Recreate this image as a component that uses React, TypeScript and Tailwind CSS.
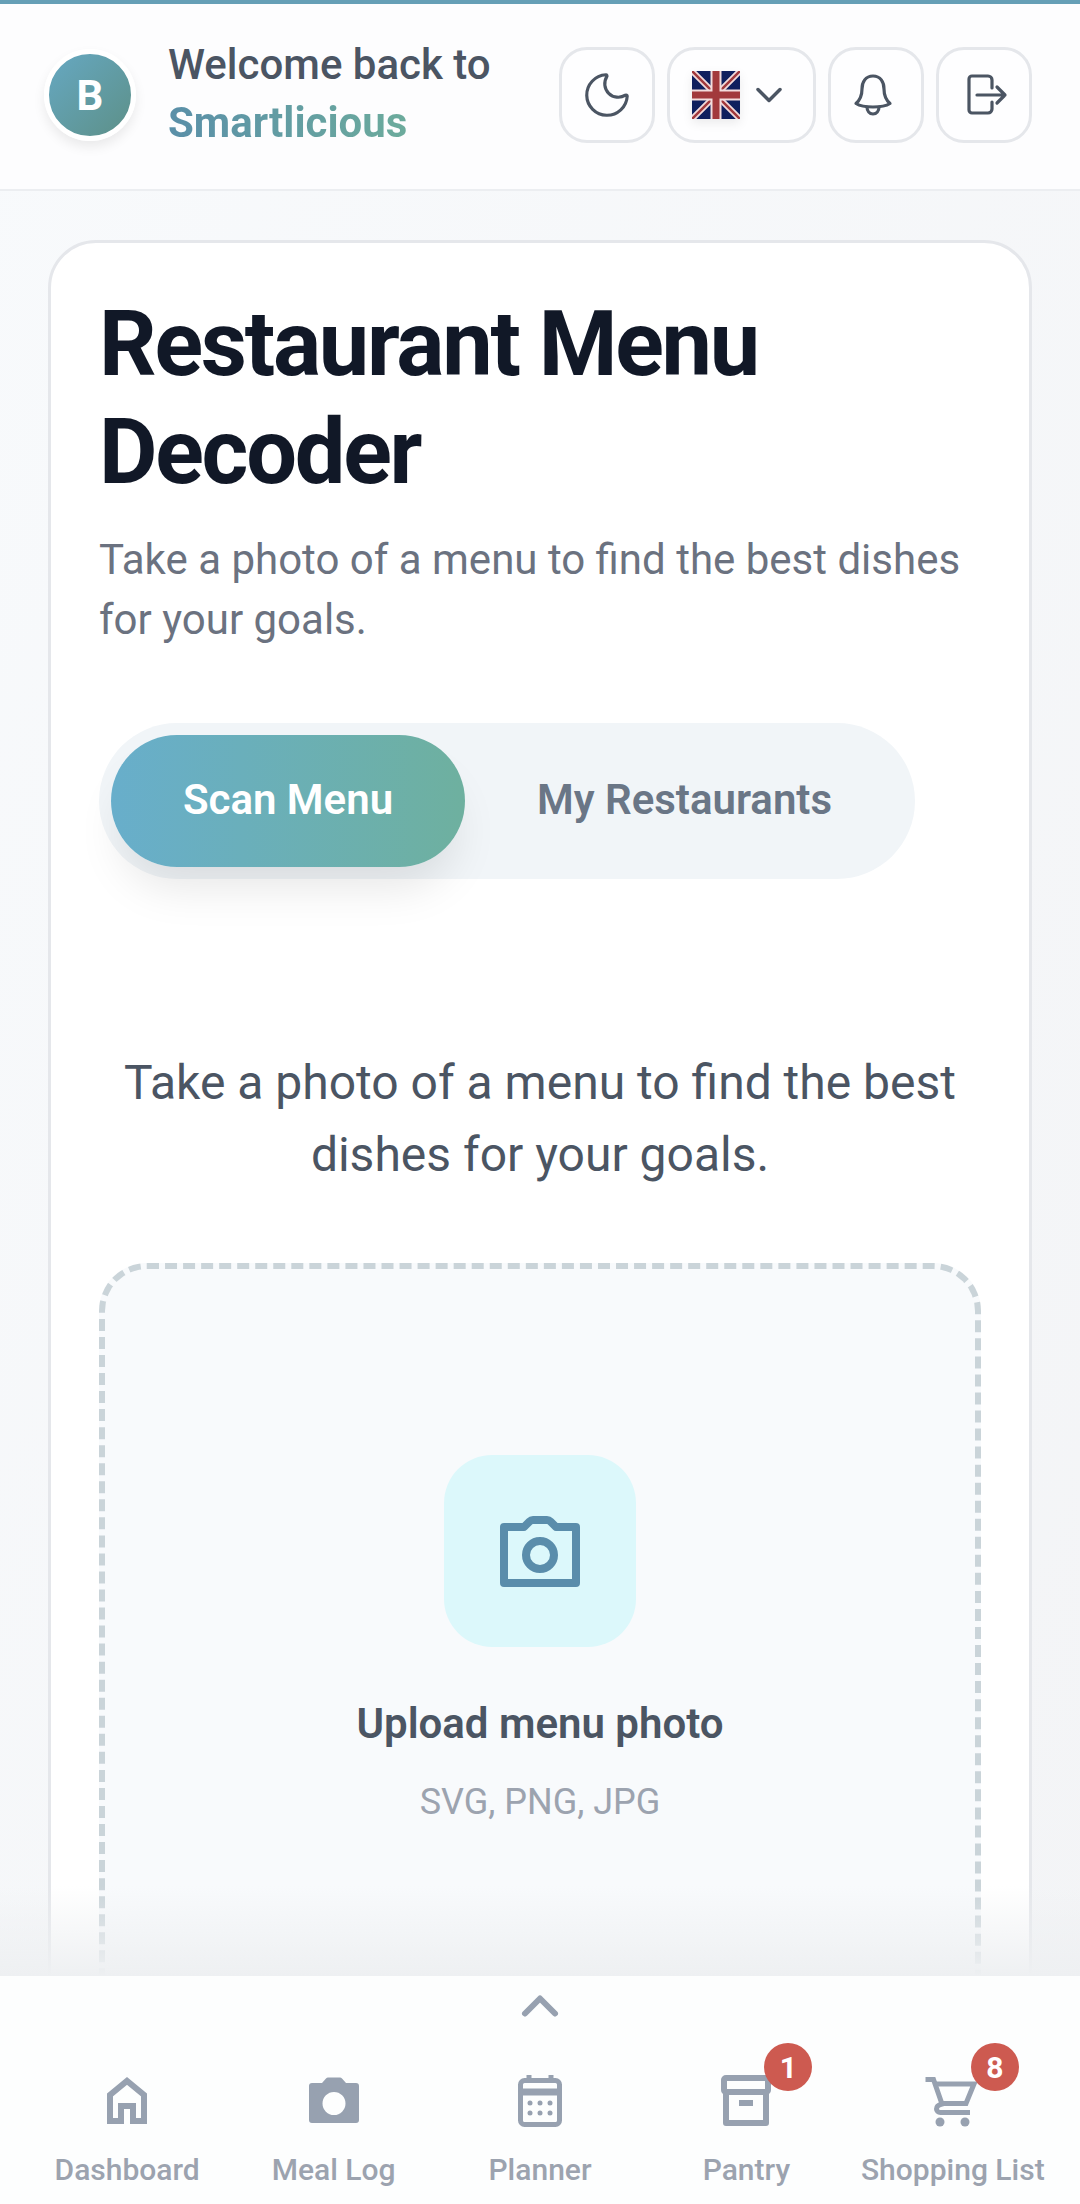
import { ChevronDown, ChevronUp, Moon } from "lucide-react";

function UkFlag() {
  return (
    <svg width="48" height="48" viewBox="0 0 48 48" className="block">
      <rect width="48" height="48" fill="#0f1f5e" />
      <path d="M0 0L48 48M48 0L0 48" stroke="#f3dcdc" strokeWidth="6" />
      <path d="M0 0L48 48M48 0L0 48" stroke="#a2393c" strokeWidth="2.500" />
      <path d="M24 0V48M0 24H48" stroke="#f3dcdc" strokeWidth="11" />
      <path d="M24 0V48M0 24H48" stroke="#a2393c" strokeWidth="7" />
    </svg>
  );
}

function BellIcon() {
  return (
    <svg width="48" height="48" viewBox="0 0 48 48" fill="none" stroke="#4b5563" strokeWidth="3.200" strokeLinecap="round" strokeLinejoin="round">
      <path d="M21 5c-7.500 0-11 6-11 13 0 7-2 11-6 14.500 4 2.500 10 3.500 17 3.500s13-1 17-3.500c-4-3.500-6-7.500-6-14.500 0-7-3.500-13-11-13Z" />
      <path d="M15 36c0 4 2.500 7 6 7s6-3 6-7" />
    </svg>
  );
}

function LogoutIcon() {
  return (
    <svg width="48" height="48" viewBox="0 0 48 48" fill="none" stroke="#4b5563" strokeWidth="3.200" strokeLinecap="round" strokeLinejoin="round">
      <path d="M32 17V9a4 4 0 0 0-4-4H12a3 3 0 0 0-3 3v31a3 3 0 0 0 3 3h16a4 4 0 0 0 4-4v-7" />
      <path d="M17 24H45M37 16l8 8-8 8" />
    </svg>
  );
}

function HomeIcon() {
  return (
    <svg width="60" height="60" viewBox="0 0 60 60" fill="none" stroke="#97a1b0" strokeWidth="6">
      <path d="M13 51V25L30 11l17 14v26H36V36H24v15Z" />
    </svg>
  );
}

function CameraSolid() {
  return (
    <svg width="60" height="60" viewBox="0 0 60 60">
      <path
        fill="#97a1b0"
        fillRule="evenodd"
        d="M8 13h10l4-4.500c.6-.6 1.300-.9 2-.9h12c.7 0 1.400.3 2 .9l4 4.500h10a3 3 0 0 1 3 3v34a3 3 0 0 1-3 3H8a3 3 0 0 1-3-3V16a3 3 0 0 1 3-3Zm22 9a11.500 11.500 0 1 0 0 23 11.500 11.500 0 0 0 0-23Z"
      />
    </svg>
  );
}

function CalendarIcon() {
  return (
    <svg width="60" height="60" viewBox="0 0 60 60" fill="none">
      <rect x="10.500" y="10.500" width="39" height="44" rx="4" stroke="#97a1b0" strokeWidth="5" />
      <path d="M10 22h40" stroke="#97a1b0" strokeWidth="7" />
      <path d="M19 5v7M41 5v7" stroke="#97a1b0" strokeWidth="5" />
      <g fill="#97a1b0">
        <circle cx="20" cy="33" r="2.500" />
        <circle cx="30" cy="33" r="2.500" />
        <circle cx="40" cy="33" r="2.500" />
        <circle cx="20" cy="43" r="2.500" />
        <circle cx="30" cy="43" r="2.500" />
        <circle cx="40" cy="43" r="2.500" />
      </g>
    </svg>
  );
}

function CartIcon() {
  return (
    <svg width="60" height="60" viewBox="0 0 60 60" fill="none" stroke="#97a1b0" strokeWidth="5">
      <path d="M2.500 9.500h8l8.500 24.500c-4 1-5.500 3-5.500 5s1.500 3.500 4 3.500H47" />
      <path d="M12 14h39l-8 19.500H19" />
      <circle cx="17" cy="52" r="4.500" fill="#97a1b0" stroke="none" />
      <circle cx="42" cy="52" r="4.500" fill="#97a1b0" stroke="none" />
    </svg>
  );
}

function BoxIcon() {
  return (
    <svg width="60" height="60" viewBox="0 0 60 60" fill="none" stroke="#97a1b0" strokeWidth="6" strokeLinejoin="round">
      <rect x="8" y="8" width="44" height="14" rx="2" />
      <path d="M10 22v31h40V22" />
      <path d="M23 33h14" />
    </svg>
  );
}

function CameraOutline() {
  return (
    <svg width="96" height="96" viewBox="0 0 96 96" fill="none" stroke="#5a8dab" strokeWidth="8" strokeLinejoin="round">
      <path d="M12 24h20l5.500-5.500c1-1 2-1.500 3.500-1.500h14c1.500 0 2.500.5 3.500 1.500L64 24h20v56H12Z" />
      <circle cx="48" cy="52" r="14" />
    </svg>
  );
}

function NavItem({ label, icon, badge }: { label: string; icon: React.ReactNode; badge?: string }) {
  return (
    <div className="flex flex-col items-center">
      <div className="relative flex h-[60px] w-[60px] items-center justify-center">
        {icon}
        {badge && (
          <span className="absolute left-[48px] top-[-27px] flex h-[48px] w-[48px] items-center justify-center rounded-full bg-[#cd5a50] text-[30px] font-bold text-white">
            {badge}
          </span>
        )}
      </div>
      <span className="mt-[17px] whitespace-nowrap text-[30px] font-medium leading-[45px] text-[#9ca3af]">{label}</span>
    </div>
  );
}

const headerBtn =
  "flex h-[96px] items-center justify-center rounded-[28px] border-[3px] border-[#e5e7eb] bg-white/60";

export default function App() {
  return (
    <div className="flex h-[2204px] flex-col overflow-hidden bg-linear-to-br from-[#f8fafc] to-[#f3f4f6] font-['Roboto',sans-serif]">
      <div className="h-[4px] shrink-0 bg-[#669fb6]" />
      <header className="flex h-[187px] shrink-0 items-center justify-between border-b-[2px] border-[#eceef1] bg-[#fdfdfe] pb-[3px] pl-[44px] pr-[48px]">
        <div className="flex items-center gap-[32px]">
          <div className="flex h-[92px] w-[92px] items-center justify-center rounded-full border-[5px] border-white bg-linear-to-br from-[#66a8c2] to-[#5d9088] text-[42px] font-bold text-white shadow-[0_6px_12px_rgba(0,0,0,0.08)]">
            B
          </div>
          <div className="mb-[2px] text-[42px] leading-[58px]">
            <div className="font-medium text-[#4b5563]">Welcome back to</div>
            <div className="w-fit bg-linear-to-r from-[#5a8fa8] to-[#6cab9c] bg-clip-text font-bold text-transparent">
              Smartlicious
            </div>
          </div>
        </div>
        <div className="flex items-center gap-[12px]">
          <button className={`${headerBtn} w-[96px]`}>
            <Moon size={54} strokeWidth={1.4} color="#4b5563" />
          </button>
          <button className={`${headerBtn} w-[149px] gap-[7px]`}>
            <span className="shadow-[0_4px_10px_rgba(0,0,0,0.08)]">
              <UkFlag />
            </span>
            <ChevronDown size={44} strokeWidth={1.9} color="#4b5563" />
          </button>
          <button className={`${headerBtn} w-[96px]`}>
            <BellIcon />
          </button>
          <button className={`${headerBtn} w-[96px]`}>
            <LogoutIcon />
          </button>
        </div>
      </header>

      <main className="relative min-h-0 flex-1 overflow-hidden px-[48px] pt-[49px]">
        <section className="h-[2400px] rounded-[48px] border-[3px] border-[#e5e7eb] bg-white px-[48px] pt-[48px]">
          <h1 className="text-[90px] font-bold leading-[108px] tracking-[-0.025em] text-[#111827]">
            Restaurant Menu Decoder
          </h1>
          <p className="mt-[23px] text-[42px] leading-[60px] text-[#6b7280]">
            Take a photo of a menu to find the best dishes for your goals.
          </p>

          <div className="mt-[73px] flex h-[156px] w-[816px] items-center rounded-full bg-[#f1f5f8] p-[12px]">
            <button className="h-[132px] w-[354px] rounded-full bg-linear-to-r from-[#68aecb] to-[#6eb09f] pb-[3px] text-[42px] font-semibold text-white shadow-[0_30px_45px_-10px_rgba(0,0,0,0.1)]">
              Scan Menu
            </button>
            <button className="h-[132px] flex-1 pb-[3px] pl-[1px] text-[42px] font-semibold text-[#6a7686]">My Restaurants</button>
          </div>

          <p className="mt-[168px] px-[12px] text-center text-[48px] leading-[72px] text-[#4b5563]">
            Take a photo of a menu to find the best dishes for your goals.
          </p>

          <div className="mt-[72px] flex h-[1000px] flex-col items-center rounded-[48px] border-[6px] border-dashed border-[#cad4d9] bg-[#f8fafc] pt-[186px]">
            <div className="flex h-[192px] w-[192px] items-center justify-center rounded-[48px] bg-[#dcf8fb]">
              <CameraOutline />
            </div>
            <div className="mt-[47px] text-[42px] font-semibold leading-[60px] text-[#4b5563]">Upload menu photo</div>
            <div className="mt-[21px] text-[36px] leading-[54px] text-[#9ca3af]">SVG, PNG, JPG</div>
          </div>
        </section>
        <div className="absolute inset-x-0 bottom-0 h-[90px] bg-linear-to-b from-transparent to-[#eef0f2]" />
      </main>

      <nav className="flex h-[228px] shrink-0 flex-col bg-[#fdfefe]">
        <div className="flex h-[60px] items-center justify-center">
          <ChevronUp size={60} strokeWidth={2.4} color="#97a1b0" />
        </div>
        <div className="mt-[34px] grid grid-cols-5 px-[24px]">
          <NavItem label="Dashboard" icon={<HomeIcon />} />
          <NavItem label="Meal Log" icon={<CameraSolid />} />
          <NavItem label="Planner" icon={<CalendarIcon />} />
          <NavItem label="Pantry" icon={<BoxIcon />} badge="1" />
          <NavItem label="Shopping List" icon={<CartIcon />} badge="8" />
        </div>
      </nav>
    </div>
  );
}
